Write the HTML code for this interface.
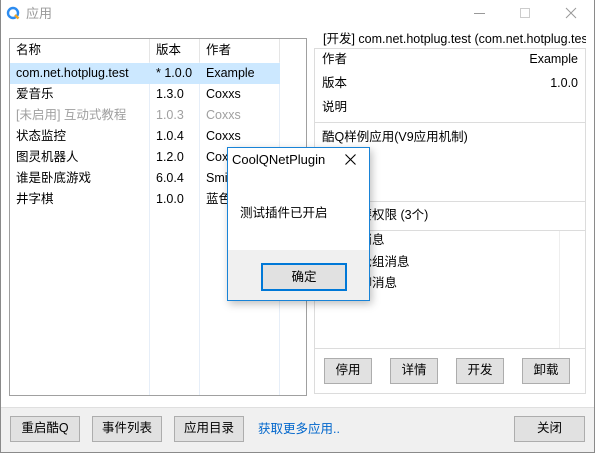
<!DOCTYPE html>
<html><head><meta charset="utf-8"><style>
*{margin:0;padding:0;box-sizing:border-box}
body{width:595px;height:453px;overflow:hidden;background:#fff;font-family:"Liberation Sans","Noto Sans CJK SC",sans-serif;font-size:12.5px;color:#000;position:relative}
.a{position:absolute;white-space:nowrap;line-height:17px}
.btn{position:absolute;background:#e1e1e1;border:1px solid #adadad;text-align:center;line-height:23px;font-size:12.5px}
.row{position:absolute;height:21px;line-height:21px;left:10px;width:270px}
.row span{position:absolute}
</style></head><body>
<div class="a" style="left:0;top:0;width:595px;height:453px;border:1px solid #8a8a8a;border-top:none"></div>
<svg class="a" style="left:6px;top:6px" width="14" height="14" viewBox="0 0 14 14"><circle cx="7" cy="7" r="5" fill="none" stroke="#2d8cf0" stroke-width="2.4"/><path d="M9 9 L12.5 12.5" stroke="#f5a623" stroke-width="2.4"/></svg>
<div class="a" style="left:26px;top:5px;font-size:13px;color:#999">应用</div>
<div class="a" style="left:474px;top:13px;width:11px;height:1px;background:#999"></div>
<div class="a" style="left:520px;top:8px;width:10px;height:10px;border:1px solid #ccc"></div>
<svg class="a" style="left:565px;top:7px" width="12" height="12"><path d="M1 1L11 11M11 1L1 11" stroke="#999" stroke-width="1"/></svg>
<div class="a" style="left:9px;top:38px;width:298px;height:358px;border:1px solid #a0a0a0;background:#fff"></div>
<div class="a" style="left:149px;top:39px;width:1px;height:356px;background:#e6eef8"></div>
<div class="a" style="left:199px;top:39px;width:1px;height:356px;background:#e6eef8"></div>
<div class="a" style="left:279px;top:39px;width:1px;height:356px;background:#e6eef8"></div>
<div class="a" style="left:149px;top:39px;width:1px;height:23px;background:#e5e5e5"></div>
<div class="a" style="left:199px;top:39px;width:1px;height:23px;background:#e5e5e5"></div>
<div class="a" style="left:279px;top:39px;width:1px;height:23px;background:#e5e5e5"></div>
<div class="row" style="top:40px"><span style="left:6px">名称</span><span style="left:146px">版本</span><span style="left:196px">作者</span></div>
<div class="row" style="top:63px;background:#cce8ff"><span style="left:6px">com.net.hotplug.test</span><span style="left:146px">* 1.0.0</span><span style="left:196px">Example</span></div>
<div class="row" style="top:84px"><span style="left:6px">爱音乐</span><span style="left:146px">1.3.0</span><span style="left:196px">Coxxs</span></div>
<div class="row" style="top:105px;color:#a0a0a0"><span style="left:6px">[未启用] 互动式教程</span><span style="left:146px">1.0.3</span><span style="left:196px">Coxxs</span></div>
<div class="row" style="top:126px"><span style="left:6px">状态监控</span><span style="left:146px">1.0.4</span><span style="left:196px">Coxxs</span></div>
<div class="row" style="top:147px"><span style="left:6px">图灵机器人</span><span style="left:146px">1.2.0</span><span style="left:196px">Coxxs</span></div>
<div class="row" style="top:168px"><span style="left:6px">谁是卧底游戏</span><span style="left:146px">6.0.4</span><span style="left:196px">Smith</span></div>
<div class="row" style="top:189px"><span style="left:6px">井字棋</span><span style="left:146px">1.0.0</span><span style="left:196px">蓝色</span></div>
<div class="a" style="left:314px;top:48px;width:272px;height:346px;border:1px solid #dcdcdc"></div>
<div class="a" style="left:320px;top:31px;background:#fff;padding:0 3px;width:266px;overflow:hidden">[开发] com.net.hotplug.test (com.net.hotplug.test)</div>
<div class="a" style="left:322px;top:51px">作者</div><div class="a" style="right:17px;top:51px">Example</div>
<div class="a" style="left:322px;top:75px">版本</div><div class="a" style="right:17px;top:75px">1.0.0</div>
<div class="a" style="left:322px;top:99px">说明</div>
<div class="a" style="left:315px;top:122px;width:270px;height:1px;background:#dcdcdc"></div>
<div class="a" style="left:322px;top:129px">酷Q样例应用(V9应用机制)</div>
<div class="a" style="left:315px;top:201px;width:270px;height:1px;background:#dcdcdc"></div>
<div class="a" style="left:322px;top:207px">应用需要权限 (3个)</div>
<div class="a" style="left:315px;top:230px;width:270px;height:1px;background:#dcdcdc"></div>
<div class="a" style="left:559px;top:231px;width:1px;height:117px;background:#eee"></div>
<div class="a" style="left:322px;top:232px">接收群消息</div>
<div class="a" style="left:322px;top:254px">接收讨论组消息</div>
<div class="a" style="left:322px;top:275px">发送私聊消息</div>
<div class="a" style="left:315px;top:348px;width:270px;height:1px;background:#dcdcdc"></div>
<div class="btn" style="left:324px;top:358px;width:48px;height:26px">停用</div>
<div class="btn" style="left:390px;top:358px;width:48px;height:26px">详情</div>
<div class="btn" style="left:456px;top:358px;width:48px;height:26px">开发</div>
<div class="btn" style="left:522px;top:358px;width:48px;height:26px">卸载</div>
<div class="a" style="left:1px;top:407px;width:593px;height:45px;background:#f0f0f0;border-top:1px solid #dfdfdf"></div>
<div class="btn" style="left:10px;top:416px;width:70px;height:26px">重启酷Q</div>
<div class="btn" style="left:92px;top:416px;width:70px;height:26px">事件列表</div>
<div class="btn" style="left:174px;top:416px;width:70px;height:26px">应用目录</div>
<div class="a" style="left:258px;top:421px;color:#0066cc">获取更多应用..</div>
<div class="btn" style="left:514px;top:416px;width:71px;height:26px">关闭</div>
<div class="a" style="left:227px;top:147px;width:143px;height:154px;border:1px solid #1883d7;background:#fff;box-shadow:2px 3px 8px rgba(0,0,0,0.25)"></div>
<div class="a" style="left:232px;top:151px;font-size:13px">CoolQNetPlugin</div>
<svg class="a" style="left:345px;top:154px" width="11" height="11"><path d="M0.5 0.5L10.5 10.5M10.5 0.5L0.5 10.5" stroke="#000" stroke-width="1.1"/></svg>
<div class="a" style="left:240px;top:205px">测试插件已开启</div>
<div class="a" style="left:228px;top:250px;width:141px;height:50px;background:#f0f0f0"></div>
<div class="btn" style="left:261px;top:263px;width:86px;height:28px;border:2px solid #0078d7;line-height:24px">确定</div>
</body></html>
